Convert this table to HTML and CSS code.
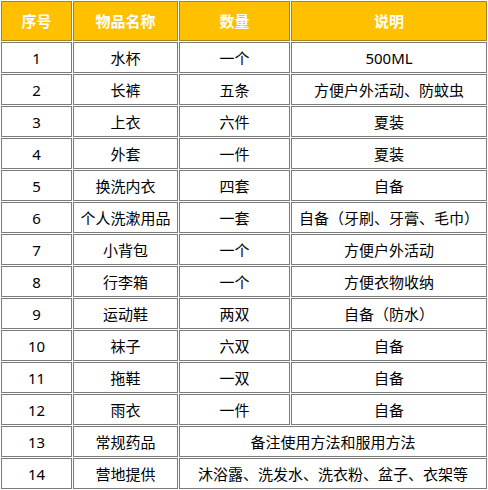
FILE: index.html
```html
<!DOCTYPE html>
<html lang="zh-CN">
<head>
<meta charset="utf-8">
<title>物品清单</title>
<link rel="stylesheet" href="styles.css">
</head>
<body>
<table class="list">
  <thead>
    <tr>
      <th class="c-no">序号</th>
      <th class="c-name">物品名称</th>
      <th class="c-qty">数量</th>
      <th class="c-note">说明</th>
    </tr>
  </thead>
  <tbody>
    <tr><td>1</td><td>水杯</td><td>一个</td><td>500ML</td></tr>
    <tr><td>2</td><td>长裤</td><td>五条</td><td>方便户外活动、防蚊虫</td></tr>
    <tr><td>3</td><td>上衣</td><td>六件</td><td>夏装</td></tr>
    <tr><td>4</td><td>外套</td><td>一件</td><td>夏装</td></tr>
    <tr><td>5</td><td>换洗内衣</td><td>四套</td><td>自备</td></tr>
    <tr><td>6</td><td>个人洗漱用品</td><td>一套</td><td>自备（牙刷、牙膏、毛巾）</td></tr>
    <tr><td>7</td><td>小背包</td><td>一个</td><td>方便户外活动</td></tr>
    <tr><td>8</td><td>行李箱</td><td>一个</td><td>方便衣物收纳</td></tr>
    <tr><td>9</td><td>运动鞋</td><td>两双</td><td>自备（防水）</td></tr>
    <tr><td>10</td><td>袜子</td><td>六双</td><td>自备</td></tr>
    <tr><td>11</td><td>拖鞋</td><td>一双</td><td>自备</td></tr>
    <tr><td>12</td><td>雨衣</td><td>一件</td><td>自备</td></tr>
    <tr><td>13</td><td>常规药品</td><td colspan="2">备注使用方法和服用方法</td></tr>
    <tr><td>14</td><td>营地提供</td><td colspan="2">沐浴露、洗发水、洗衣粉、盆子、衣架等</td></tr>
  </tbody>
</table>
</body>
</html>
```
FILE: styles.css
```css
html, body {
  margin: 0;
  padding: 0;
  background: #ffffff;
}

.list {
  width: 488px;
  table-layout: fixed;
  border-collapse: separate;
  border-spacing: 1px;
  font-family: "Noto Sans", "Noto Sans CJK SC", sans-serif;
  font-size: 15px;
  color: #000000;
}

.list th,
.list td {
  box-sizing: border-box;
  padding: 0;
  text-align: center;
  vertical-align: middle;
  line-height: 20px;
}

.list th {
  height: 40px;
  background: #ffc000;
  color: #ffffff;
  font-weight: bold;
  border: 1px solid #a88419;
}

.list td {
  height: 31px;
  border: 1px solid #7b7b7b;
}

.c-no { width: 71px; }
.c-name { width: 105px; }
.c-qty { width: 111px; }
.c-note { width: 196px; }
```
